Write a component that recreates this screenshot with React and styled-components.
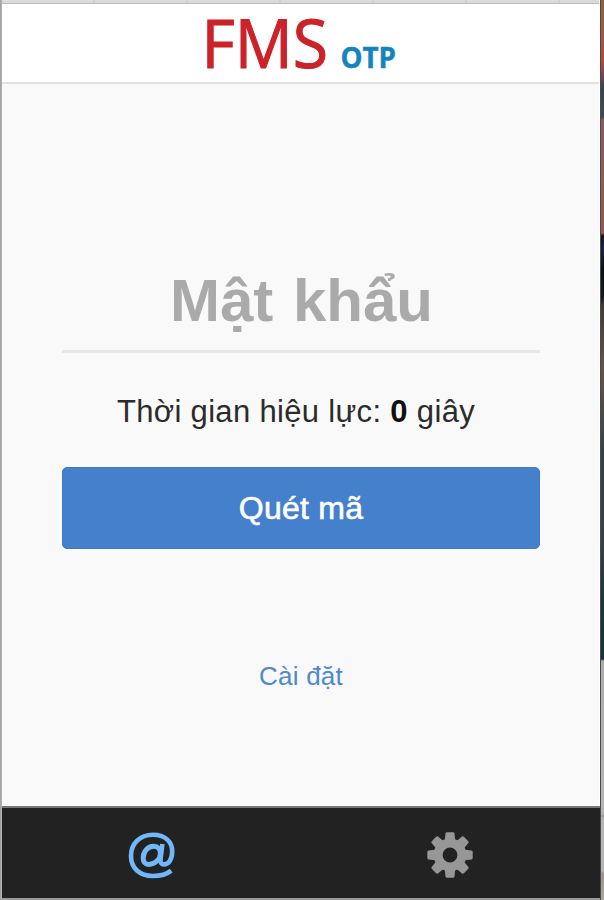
import styled, { createGlobalStyle } from 'styled-components';

const GlobalStyle = createGlobalStyle`
  * {
    box-sizing: border-box;
  }
  body {
    margin: 0;
    font-family: 'Liberation Sans', Arial, sans-serif;
    background: #f9f9f9;
  }
`;

const Desktop = styled.div`
  display: grid;
  grid-template-columns: 2px 1fr 4px;
  width: 604px;
  height: 900px;
  overflow: hidden;
`;

const LeftEdge = styled.div`
  background: linear-gradient(90deg, #a3a3a3 50%, #b0b0b0 50%);
`;

const RightEdge = styled.div`
  border-left: 1px solid #4a4a4a;
  background: linear-gradient(
    #8d6049 0,
    #a4573f 40px,
    #b8473a 62px,
    #6b4652 78px,
    #35454d 86px,
    #3a4d54 117px,
    #8d5a5a 120px,
    #8f5d55 180px,
    #94584f 233px,
    #10141c 236px,
    #14263c 248px,
    #0b1114 270px,
    #141b1c 297px,
    #3f3a37 305px,
    #695349 370px,
    #4d4a49 410px,
    #36444a 450px,
    #33434a 540px,
    #1d3540 600px,
    #16323a 659px,
    #adadad 661px,
    #b5b5b5 814px,
    #989898 816px,
    #b5b5b5 818px,
    #b5b5b5 871px,
    #9a958d 874px,
    #aba79f 900px
  );
`;

const Phone = styled.div`
  display: flex;
  flex-direction: column;
  border-right: 1px solid #fff;
  background: #f9f9f9;
`;

const TopEdge = styled.div`
  height: 4px;
  border-bottom: 1px solid #bcbcbc;
  background: repeating-linear-gradient(
    90deg,
    #dadada 0,
    #dadada 91px,
    #c4c4c4 92px,
    #dadada 93px
  );
`;

const Header = styled.header`
  display: flex;
  justify-content: center;
  height: 80px;
  border-bottom: 2px solid #e2e2e2;
  background: #fff;
`;

const Logo = styled.svg`
  width: 200px;
  height: 78px;
  overflow: visible;
  font-family: 'Open Sans', 'Noto Sans', sans-serif;
`;

const Content = styled.main`
  display: flex;
  flex: 1;
  flex-direction: column;
  align-items: center;
  width: 478px;
  margin-left: 60px;
`;

const Password = styled.div`
  width: 100%;
  height: 269px;
  padding: 182px 0 0 1px;
  border-bottom: 3px solid #e6e6e6;
  color: #aaa;
  font-size: 60px;
  font-weight: 700;
  line-height: 70px;
  word-spacing: 3px;
  text-align: center;
  white-space: nowrap;
`;

const Validity = styled.p`
  margin: 41px 0 0;
  padding-right: 10px;
  color: #2b2b2b;
  font-size: 31px;
  line-height: 36px;
  letter-spacing: 0.33px;
  white-space: nowrap;
  strong {
    color: #111;
  }
`;

const ScanButton = styled.button`
  width: 100%;
  height: 82px;
  margin-top: 37px;
  padding: 0;
  border: 1px solid #4279c2;
  border-radius: 5px;
  background: #4580cd;
  color: #fff;
  font-family: inherit;
  font-size: 32px;
  line-height: 36px;
  letter-spacing: 0.25px;
  -webkit-text-stroke: 0.6px #fff;
`;

const SettingsLink = styled.a`
  margin-top: 112px;
  color: #5088cf;
  font-size: 26px;
  line-height: 30px;
  letter-spacing: 0.2px;
`;

const TabBar = styled.nav`
  display: grid;
  grid-template-columns: 1fr 1fr;
  height: 94px;
  margin-right: -1px;
  border-top: 2px solid #777;
  border-bottom: 2px solid #999;
  background: #222;
`;

const Tab = styled.div`
  display: flex;
  align-items: center;
  justify-content: center;
  padding: 4px 1px 0 0;
  color: ${({ $active }) => ($active ? '#71b7f9' : '#979797')};
  svg {
    width: 48px;
    height: 48px;
  }
`;

function AtIcon() {
  return (
    <svg
      viewBox="-1 0 48 48"
      fill="none"
      stroke="currentColor"
      strokeWidth="4.6"
    >
      <path d="M43.2 39.6C38.6 43.3 32.5 45 25 45C11.5 45 3 37 3 25C3 12.5 12 3.7 25 3.7C37 3.7 44.2 10.5 44.2 20.5C44.2 28.5 40.5 33.4 36 33.4C32.8 33.4 32.2 31 32.6 27.8L34.4 13" />
      <path
        strokeWidth="5"
        d="M32.4 22.4C32.4 18 29.8 15.3 25.8 15.3C19.4 15.3 15.2 21 15.2 27C15.2 31 17.2 33.4 20.8 33.4C27 33.4 32.4 28 32.4 22.4Z"
      />
    </svg>
  );
}

const TEETH = [0, 45, 90, 135, 180, 225, 270, 315];

function GearIcon() {
  return (
    <svg viewBox="-24 -24 48 48" fill="currentColor">
      <circle r="11.9" fill="none" stroke="currentColor" strokeWidth="9" />
      {TEETH.map((angle) => (
        <path
          key={angle}
          transform={`rotate(${angle})`}
          d="M-5.2 -15L-4.5 -21.5Q-4.3 -22.7 -3.1 -22.7H3.1Q4.3 -22.7 4.5 -21.5L5.2 -15Z"
        />
      ))}
    </svg>
  );
}

export default function App() {
  return (
    <>
      <GlobalStyle />
      <Desktop>
        <LeftEdge />
        <Phone>
          <TopEdge />
          <Header>
            <Logo viewBox="200 4 200 78" aria-label="FMS OTP">
              <text
                x="200.5"
                y="68.3"
                fill="#cc2229"
                stroke="#cc2229"
                strokeWidth="1.1"
                fontSize="68"
                textLength="126.5"
                lengthAdjust="spacingAndGlyphs"
              >
                FMS
              </text>
              <text
                x="339.5"
                y="68"
                fill="#1484bf"
                stroke="#1484bf"
                strokeWidth="0.4"
                fontSize="28"
                fontWeight="700"
                textLength="55.5"
                lengthAdjust="spacingAndGlyphs"
              >
                OTP
              </text>
            </Logo>
          </Header>
          <Content>
            <Password>Mật khẩu</Password>
            <Validity>
              Thời gian hiệu lực: <strong>0</strong> giây
            </Validity>
            <ScanButton>Quét mã</ScanButton>
            <SettingsLink>Cài đặt</SettingsLink>
          </Content>
          <TabBar>
            <Tab $active>
              <AtIcon />
            </Tab>
            <Tab>
              <GearIcon />
            </Tab>
          </TabBar>
        </Phone>
        <RightEdge />
      </Desktop>
    </>
  );
}
